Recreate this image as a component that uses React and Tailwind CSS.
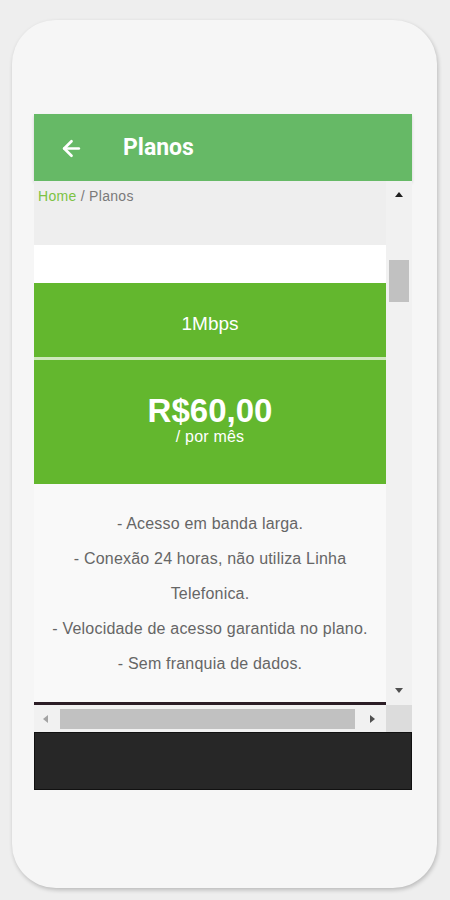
import { ArrowLeft } from "lucide-react";

const features = [
	"- Acesso em banda larga.",
	"- Conexão 24 horas, não utiliza Linha Telefonica.",
	"- Velocidade de acesso garantida no plano.",
	"- Sem franquia de dados.",
];

function Tri({ dir, color }) {
	const pts = {
		up: "1,7 5,2 9,7",
		down: "1,3 5,8 9,3",
		left: "7,1 2,5 7,9",
		right: "3,1 8,5 3,9",
	}[dir];
	return (
		<svg width="10" height="10" viewBox="0 0 10 10">
			<polygon points={pts} fill={color} />
		</svg>
	);
}

export default function App() {
	return (
		<div className="w-[450px] h-[900px] bg-[#eeeeee] pt-[20px] pl-[12px] font-['Liberation_Sans',Arial,sans-serif]">
			<div className="w-[425px] h-[868px] rounded-[44px] bg-[#f6f6f6] shadow-[1px_2px_4px_rgba(0,0,0,0.22)] pt-[94px] pl-[22px] pr-[25px]">
				{/* header */}
				<div className="h-[67px] bg-[#66b966] flex items-center pt-[2px] shadow-[0_2px_3px_rgba(0,0,0,0.15)]">
					<ArrowLeft className="ml-[25px] text-white" size={25} strokeWidth={2.6} />
					<span className="ml-[39px] text-white text-[23px] font-bold font-['Roboto',sans-serif]">
						Planos
					</span>
				</div>

				<div className="flex">
					{/* page content */}
					<div className="w-[352px] bg-[#eeeeee] flex flex-col">
						<div className="h-[64px] pl-[4px] pt-[6px] text-[14px] tracking-[0.3px] leading-[18px]">
							<span className="text-[#7cc243]">Home</span>
							<span className="text-[#7a7a7a]"> / Planos</span>
						</div>
						<div className="h-[38px] bg-white" />
						<div className="h-[74px] bg-[#63b72e] flex items-center justify-center text-white text-[19px] pt-[9px]">
							1Mbps
						</div>
						<div className="h-[3px] bg-[#cfe8bd]" />
						<div className="h-[124px] bg-[#63b72e] flex flex-col items-center justify-center text-white pb-[4px]">
							<span className="text-[33px] font-bold leading-[34px]">R$60,00</span>
							<span className="text-[16px] tracking-[0.2px] leading-[18px]">/ por mês</span>
						</div>
						<div className="h-[218px] bg-[#f9f9f9] px-[12px] pt-[22px] text-center text-[16px] tracking-[0.2px] leading-[35px] text-[#666666]">
							{features.map((f) => (
								<p key={f}>{f}</p>
							))}
						</div>
						<div className="h-[3px] bg-[#2b1d25]" />
					</div>

					{/* vertical scrollbar */}
					<div className="w-[26px] h-[524px] bg-[#f1f1f1] flex flex-col items-center justify-between pt-[9px] pb-[10px]">
						<Tri dir="up" color="#1f1f1f" />
						<div className="flex-1 w-full px-[3px] pt-[60px]">
							<div className="h-[42px] bg-[#c1c1c1]" />
						</div>
						<Tri dir="down" color="#505050" />
					</div>
				</div>

				{/* horizontal scrollbar */}
				<div className="flex h-[27px]">
					<div className="w-[352px] bg-[#f1f1f1] flex items-center pl-[7px] pr-[9px]">
						<Tri dir="left" color="#a3a3a3" />
						<div className="ml-[9px] w-[295px] h-[20px] bg-[#c1c1c1]" />
						<div className="ml-auto">
							<Tri dir="right" color="#505050" />
						</div>
					</div>
					<div className="w-[26px] bg-[#dcdcdc]" />
				</div>

				{/* footer bar */}
				<div className="h-[58px] bg-[#272727] border border-[#111111]" />
			</div>
		</div>
	);
}
